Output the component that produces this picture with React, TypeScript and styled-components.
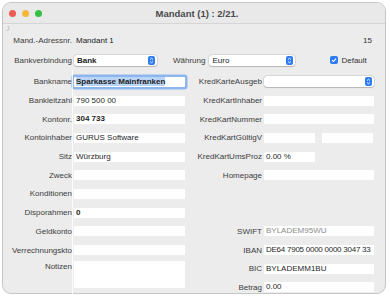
import * as React from 'react';
import styled, { createGlobalStyle } from 'styled-components';

const GlobalStyle = createGlobalStyle`
  html, body {
    margin: 0;
    background: #fff;
  }
  body {
    font-family: "Liberation Sans", Arial, sans-serif;
  }
`;

const Page = styled.div`
  position: relative;
  height: 303px;
  overflow: hidden;
`;

const Window = styled.div`
  margin: 2px 0 0 2px;
  width: 384px;
  height: 292px;
  box-sizing: border-box;
  border: 1px solid #c6c6c6;
  border-radius: 9px;
  background: #ececec;
  overflow: hidden;
`;

const TitleBar = styled.div`
  display: grid;
  grid-template-columns: 1fr auto 1fr;
  align-items: center;
  height: 20px;
  padding-left: 6px;
  border-bottom: 1px solid #d5d5d5;
  background: #e9e9e9;
`;

const Lights = styled.div`
  display: flex;
  gap: 6px;
`;

const Light = styled.span<{ $color: string }>`
  width: 7px;
  height: 7px;
  border-radius: 50%;
  background: ${(p) => p.$color};
`;

const Title = styled.div`
  font-size: 9.5px;
  font-weight: bold;
  color: #4a4a4a;
`;

const JMark = styled.div`
  height: 9px;
  line-height: 9px;
  padding-left: 3px;
  font-size: 7px;
  color: #b8b8b8;
`;

const HeaderRow = styled.div`
  display: flex;
  align-items: center;
  height: 15px;
  padding-right: 13px;
  font-size: 8px;
  color: #333;
`;

const Label = styled.span<{ $top?: boolean }>`
  font-size: 8px;
  color: #3c3c3c;
  text-align: right;
  white-space: nowrap;
  ${(p) => (p.$top ? 'grid-row: span 2; align-self: start; margin-top: 3px;' : '')}
`;

const LeftLabel = styled(Label)`
  width: 69px;
  flex: none;
`;

const Value = styled.span`
  margin-left: 4px;
  color: #222;
`;

const Count = styled.span`
  margin-left: auto;
  color: #333;
`;

const BankRow = styled.div`
  display: flex;
  align-items: center;
  height: 24.5px;
`;

const Popup = styled.div<{ $width: number; $bold?: boolean }>`
  display: flex;
  align-items: center;
  justify-content: space-between;
  width: ${(p) => p.$width}px;
  height: 11px;
  box-sizing: border-box;
  padding: 0 2px 0 3px;
  border-radius: 3px;
  background: #fff;
  box-shadow: 0 0 0 0.5px rgba(0, 0, 0, 0.14), 0 0.5px 1px rgba(0, 0, 0, 0.18);
  font-size: 8px;
  font-weight: ${(p) => (p.$bold ? 'bold' : 'normal')};
  color: #222;
`;

const Gap = styled.span<{ $w: number }>`
  width: ${(p) => p.$w}px;
  flex: none;
`;

const CheckText = styled.span`
  margin-left: 3px;
  font-size: 8px;
  color: #333;
`;

const FormGrid = styled.div`
  display: grid;
  grid-template-columns: 69px 111px 75px 110px;
  column-gap: 2px;
  grid-auto-rows: 18.7px;
  align-items: center;
`;

const Field = styled.div<{ $bold?: boolean; $muted?: boolean; $width?: number; $tight?: boolean }>`
  width: ${(p) => (p.$width ? `${p.$width}px` : 'auto')};
  height: 10px;
  box-sizing: border-box;
  padding: 0 2px;
  background: #fff;
  font-size: 8px;
  line-height: 10px;
  letter-spacing: ${(p) => (p.$tight ? '-0.25px' : 'normal')};
  font-weight: ${(p) => (p.$bold ? 'bold' : 'normal')};
  color: ${(p) => (p.$muted ? '#8c8c8c' : '#1f1f1f')};
  white-space: nowrap;
  overflow: hidden;
`;

const FocusField = styled(Field)`
  box-shadow: 0 0 0 2.5px #8db5ee;
  border-radius: 1px;
`;

const Selection = styled.span`
  background: #b9d4f6;
`;

const Notes = styled.div`
  grid-row: span 2;
  align-self: start;
  margin-top: 1.5px;
  height: 27px;
  background: #fff;
`;

const Pair = styled.div`
  display: flex;
  gap: 7px;
`;

const Divider = styled.div`
  position: absolute;
  left: 72px;
  top: 70px;
  bottom: 0;
  width: 1px;
  background: rgba(255, 255, 255, 0.85);
`;

const Stepper = () => (
  <svg width="7" height="9" viewBox="0 0 7 9">
    <rect width="7" height="9" rx="2" fill="#2d7cf6" />
    <path d="M2 3.6 L3.5 2.2 L5 3.6 M2 5.4 L3.5 6.8 L5 5.4" stroke="#fff" strokeWidth="0.9" fill="none" />
  </svg>
);

const Checkbox = () => (
  <svg width="8" height="8" viewBox="0 0 8 8">
    <rect width="8" height="8" rx="2" fill="#2d7cf6" />
    <path d="M2 4.1 L3.4 5.5 L6 2.6" stroke="#fff" strokeWidth="1.1" fill="none" />
  </svg>
);

const Empty = styled.span``;

export default function App() {
  return (
    <Page>
      <GlobalStyle />
      <Window>
        <TitleBar>
          <Lights>
            <Light $color="#ee5d55" />
            <Light $color="#f4b93a" />
            <Light $color="#35c043" />
          </Lights>
          <Title>Mandant (1) : 2/21.</Title>
          <span />
        </TitleBar>

        <JMark>J</JMark>

        <HeaderRow>
          <LeftLabel>Mand.-Adressnr.</LeftLabel>
          <Value>Mandant 1</Value>
          <Count>15</Count>
        </HeaderRow>

        <BankRow>
          <LeftLabel>Bankverbindung</LeftLabel>
          <Gap $w={2} />
          <Popup $width={83} $bold>
            Bank
            <Stepper />
          </Popup>
          <Gap $w={16} />
          <Label>Währung</Label>
          <Gap $w={4} />
          <Popup $width={86}>
            Euro
            <Stepper />
          </Popup>
          <Gap $w={35} />
          <Checkbox />
          <CheckText>Default</CheckText>
        </BankRow>

        <FormGrid>
          <Label>Bankname</Label>
          <FocusField $bold>
            <Selection>Sparkasse Mainfranken</Selection>
          </FocusField>
          <Label>KredKarteAusgeb</Label>
          <Popup $width={110}>
            <span />
            <Stepper />
          </Popup>

          <Label>Bankleitzahl</Label>
          <Field>790 500 00</Field>
          <Label>KredKartInhaber</Label>
          <Field />

          <Label>Kontonr.</Label>
          <Field $bold>304 733</Field>
          <Label>KredKartNummer</Label>
          <Field />

          <Label>Kontoinhaber</Label>
          <Field>GURUS Software</Field>
          <Label>KredKartGültigV</Label>
          <Pair>
            <Field $width={51} />
            <Field $width={51} />
          </Pair>

          <Label>Sitz</Label>
          <Field>Würzburg</Field>
          <Label>KredKartUmsProz</Label>
          <Field $width={51}>0.00 %</Field>

          <Label>Zweck</Label>
          <Field />
          <Label>Homepage</Label>
          <Field />

          <Label>Konditionen</Label>
          <Field />
          <Empty />
          <Empty />

          <Label>Disporahmen</Label>
          <Field $bold>0</Field>
          <Empty />
          <Empty />

          <Label>Geldkonto</Label>
          <Field />
          <Label>SWIFT</Label>
          <Field $muted>BYLADEM95WU</Field>

          <Label>Verrechnungskto</Label>
          <Field />
          <Label>IBAN</Label>
          <Field $tight>DE64 7905 0000 0000 3047 33</Field>

          <Label $top>Notizen</Label>
          <Notes />
          <Label>BIC</Label>
          <Field>BYLADEMM1BU</Field>
          <Label>Betrag</Label>
          <Field>0.00</Field>
        </FormGrid>
      </Window>
      <Divider />
    </Page>
  );
}
